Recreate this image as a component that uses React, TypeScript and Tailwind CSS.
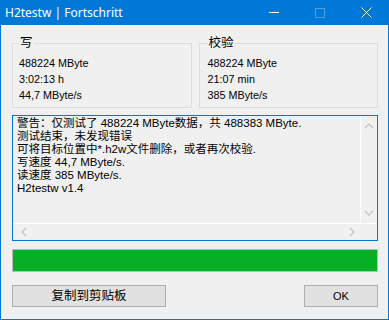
import React from "react";

const ui = { fontFamily: '"Liberation Sans", "Noto Sans CJK SC", sans-serif' };

function Chevron({ dir }: { dir: "up" | "down" | "left" | "right" }) {
  const d =
    dir === "up"
      ? "M1 6 L5 2 L9 6"
      : dir === "down"
      ? "M1 2 L5 6 L9 2"
      : dir === "left"
      ? "M6 1 L2 5 L6 9"
      : "M2 1 L6 5 L2 9";
  const w = dir === "up" || dir === "down" ? 10 : 8;
  const h = dir === "up" || dir === "down" ? 8 : 10;
  return (
    <svg width={w} height={h} viewBox={`0 0 ${w} ${h}`}>
      <path d={d} fill="none" stroke="#c4c4c4" strokeWidth="1.3" />
    </svg>
  );
}

function Group({ title, lines, pl }: { title: string; lines: string[]; pl: string }) {
  return (
    <fieldset className={`border border-[#dcdcdc] h-[72px] ${pl} pr-[6px] pb-0`}>
      <legend className="text-[12.5px] leading-[15px] px-[1px] text-black">{title}</legend>
      <div className="pt-[4px]">
        {lines.map((l) => (
          <div key={l} className="text-[10.8px] leading-[16px] h-[16px] text-black">
            {l}
          </div>
        ))}
      </div>
    </fieldset>
  );
}

export default function App() {
  const textLines = [
    "警告：仅测试了 488224 MByte数据，共 488383 MByte.",
    "测试结束，未发现错误",
    "可将目标位置中*.h2w文件删除，或者再次校验.",
    "写速度 44,7 MByte/s.",
    "读速度 385 MByte/s.",
    "H2testw v1.4",
  ];
  return (
    <div className="w-[389px] h-[320px] bg-[#0078d7] flex flex-col" style={ui}>
      <div className="h-[25px] flex items-center shrink-0">
        <div
          className="pl-[5px] text-white text-[12px] flex-1"
          style={{ fontFamily: '"Noto Sans", "Liberation Sans", sans-serif' }}
        >
          H2testw | Fortschritt
        </div>
        <div className="w-[46px] h-[25px] flex items-center justify-center">
          <div className="w-[10px] h-[1px] bg-white" />
        </div>
        <div className="w-[46px] h-[25px] flex items-center justify-center">
          <div className="w-[10px] h-[10px] border border-[#ffffff4d]" />
        </div>
        <div className="w-[46px] h-[25px] flex items-center justify-center">
          <svg width="11" height="11" viewBox="0 0 11 11">
            <path d="M0.5 0.5 L10.5 10.5 M10.5 0.5 L0.5 10.5" stroke="white" strokeWidth="1" />
          </svg>
        </div>
      </div>
      <div className="flex-1 mx-[1px] mb-[1px] bg-[#f0f0f0] pl-[11px] pr-[10px] pt-[11px] flex flex-col">
        <div className="grid grid-cols-2 gap-[7px]">
          <Group title="写" lines={["488224 MByte", "3:02:13 h", "44,7 MByte/s"]} pl="pl-[6px]" />
          <Group title="校验" lines={["488224 MByte", "21:07 min", "385 MByte/s"]} pl="pl-[8px]" />
        </div>
        <div className="mt-[7px] h-[126px] border border-[#0078d7] flex flex-col">
          <div className="flex flex-1">
            <div className="flex-1 pl-[4px] pt-[1px] text-[11.5px] text-black">
              {textLines.map((l) => (
                <div key={l} className="h-[13px] leading-[13px] whitespace-nowrap">
                  {l}
                </div>
              ))}
            </div>
            <div className="w-[17px] border-l border-white flex flex-col items-center justify-between py-[6px]">
              <Chevron dir="up" />
              <Chevron dir="down" />
            </div>
          </div>
          <div className="h-[17px] flex border-t border-white">
            <div className="flex-1 flex items-center justify-between pl-[7px] pr-[4px]">
              <Chevron dir="left" />
              <Chevron dir="right" />
            </div>
            <div className="w-[17px]" />
          </div>
        </div>
        <div className="mt-[8px] h-[23px] border border-[#bcbcbc] bg-[#06b025]" />
        <div className="mt-[13px] flex justify-between">
          <button className="w-[154px] h-[22px] bg-[#e1e1e1] border border-[#adadad] text-[12.5px] text-black flex items-center justify-center">
            复制到剪贴板
          </button>
          <button className="w-[74px] h-[22px] bg-[#e1e1e1] border border-[#adadad] text-[11px] text-black flex items-center justify-center">
            OK
          </button>
        </div>
      </div>
    </div>
  );
}
